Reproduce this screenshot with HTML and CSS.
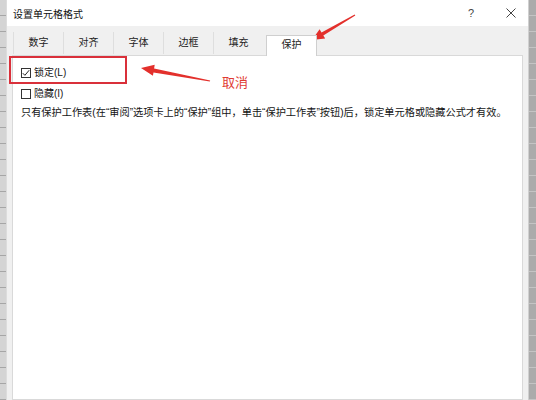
FILE: index.html
```html
<!DOCTYPE html>
<html lang="zh-CN">
<head>
<meta charset="utf-8">
<title>设置单元格格式</title>
<link rel="stylesheet" href="styles.css">
</head>
<body>
<div class="screen">
  <div class="sheet sheet-left"></div>
  <div class="dialog">
    <div class="titlebar">
      <span class="title">设置单元格格式</span>
      <span class="help">?</span>
      <span class="close">
        <svg width="10" height="10" viewBox="0 0 10 10"><path d="M0.5 0.5L9.5 9.5M9.5 0.5L0.5 9.5" stroke="#444" stroke-width="1" fill="none"/></svg>
      </span>
    </div>
    <div class="tabs">
      <div class="tab">数字</div>
      <div class="tab">对齐</div>
      <div class="tab">字体</div>
      <div class="tab">边框</div>
      <div class="tab">填充</div>
      <div class="tab active">保护</div>
    </div>
    <div class="body">
      <div class="panel">
        <div class="check">
          <span class="box"><svg width="8" height="8" viewBox="0 0 8 8"><path d="M0.8 4.2L2.9 6.3L7.2 1.2" stroke="#222" stroke-width="1" fill="none"/></svg></span>
          <span class="label">锁定(L)</span>
        </div>
        <div class="check">
          <span class="box"></span>
          <span class="label">隐藏(I)</span>
        </div>
        <p class="note">只有保护工作表(在“审阅”选项卡上的“保护”组中，单击“保护工作表”按钮)后，锁定单元格或隐藏公式才有效。</p>
      </div>
    </div>
  </div>
  <div class="sheet sheet-right"></div>

  <div class="annot-box"></div>
  <div class="annot-text">取消</div>
  <svg class="arrows" width="536" height="400" viewBox="0 0 536 400">
    <polygon fill="#e3302c" points="141,68 154.7,64.8 154.1,68.4 210.2,80.4 209.8,81.6 153.5,72.4 152.9,75.8"/>
    <polygon fill="#e3302c" points="312,40 319.6,29.2 321.5,32.4 354.7,14.5 355.3,15.5 323.3,35.4 325.2,38.6"/>
  </svg>
</div>
</body>
</html>
```

FILE: styles.css
```css
html, body {
  margin: 0;
  padding: 0;
  background: #ffffff;
}

body {
  font-family: "Liberation Sans", "Noto Sans CJK SC", sans-serif;
  font-size: 10px;
  color: #141414;
}

.screen {
  position: relative;
  width: 536px;
  height: 400px;
  overflow: hidden;
  display: flex;
}

.sheet {
  flex: none;
  height: 100%;
  background-color: #c9c9c9;
  background-image: repeating-linear-gradient(to bottom, transparent 0, transparent 15px, #a6a6a6 15px, #a6a6a6 16px);
}

.sheet-left {
  width: 6px;
  background-color: #d4d4d4;
}

.sheet-right {
  width: 7px;
  background-color: #ababab;
  background-image: repeating-linear-gradient(to bottom, transparent 0, transparent 15px, #c4c4c4 15px, #c4c4c4 16px);
}

.dialog {
  flex: 1;
  min-width: 0;
  display: flex;
  flex-direction: column;
  background: #f0f0f0;
  border-left: 1px solid #dcdcdc;
  border-right: 1px solid #d0d0d0;
}

.titlebar {
  height: 26px;
  flex: none;
  background: #ffffff;
  display: flex;
  align-items: center;
  padding-left: 6px;
  padding-right: 7px;
}

.title {
  flex: 1;
  font-size: 10px;
  color: #111;
}

.help {
  width: 20px;
  text-align: center;
  font-size: 11px;
  color: #444;
}

.close {
  width: 20px;
  margin-left: 20px;
  display: flex;
  justify-content: center;
  align-items: center;
}

.tabs {
  height: 29px;
  flex: none;
  display: flex;
  align-items: flex-end;
  padding-left: 6px;
}

.tab {
  width: 50px;
  height: 22px;
  line-height: 22px;
  margin-bottom: 1px;
  box-sizing: border-box;
  text-align: center;
  border-left: 1px solid #dedede;
  color: #222;
}

.tab.active {
  position: relative;
  z-index: 1;
  width: 51px;
  height: 21px;
  line-height: 18px;
  margin-left: 3px;
  margin-bottom: -1px;
  background: #ffffff;
  border: 1px solid #cfcfcf;
  border-bottom: none;
}

.body {
  flex: 1;
  min-height: 0;
  display: flex;
  padding: 0 5px;
}

.panel {
  flex: 1;
  min-width: 0;
  overflow: hidden;
  background: #ffffff;
  border: 1px solid #d9d9d9;
  padding: 6px 8px 0 8px;
}

.check {
  height: 21px;
  display: flex;
  align-items: center;
}

.box {
  width: 10px;
  height: 10px;
  box-sizing: border-box;
  border: 1px solid #333;
  background: #fff;
  margin-right: 3px;
  display: flex;
  align-items: center;
  justify-content: center;
}

.label {
  line-height: 14px;
}

.note {
  margin: 2px 0 0 0;
  font-size: 10.2px;
  line-height: 14px;
  white-space: nowrap;
}

.annot-box {
  position: absolute;
  left: 9px;
  top: 56px;
  width: 118px;
  height: 28px;
  box-sizing: border-box;
  border: 2.5px solid #d9303a;
}

.annot-text {
  position: absolute;
  left: 222px;
  top: 74px;
  font-size: 13px;
  line-height: 18px;
  color: #df3b34;
}

.arrows {
  position: absolute;
  left: 0;
  top: 0;
  pointer-events: none;
}
```
